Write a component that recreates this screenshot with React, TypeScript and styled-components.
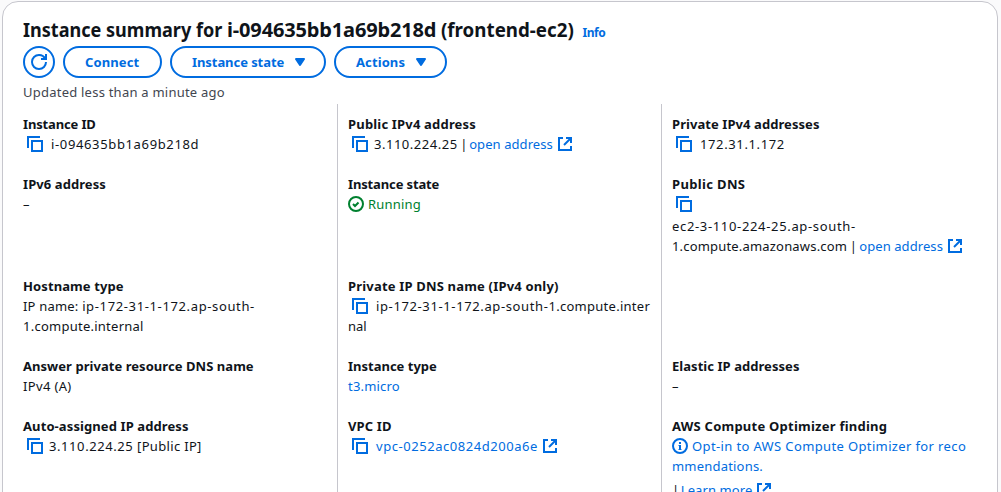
import React from 'react';
import styled, { createGlobalStyle } from 'styled-components';

const GlobalStyle = createGlobalStyle`
  * { box-sizing: border-box; }
  body { margin: 0; background: #fff; overflow: hidden; }
`;

const Page = styled.main`
  height: 492px;
  padding: 1px 3px 0 2px;
  overflow: hidden;
  background: #fafafb;
  color: #0f141a;
  font: 13px/20px 'Noto Sans', 'Open Sans', sans-serif;
`;

const Panel = styled.section`
  height: 560px;
  padding: 16px 20px 0;
  border: 1px solid #c6c6cd;
  border-radius: 16px;
  background: #fff;
`;

const Heading = styled.h1`
  display: flex;
  align-items: baseline;
  height: 24px;
  margin: 0 0 4px;
  font-size: 20px;
  line-height: 24px;
  font-weight: 700;
  white-space: pre;
`;

const Condensed = styled.span<{ $width: number; $scale: number }>`
  width: ${(p) => p.$width}px;
  transform: scaleX(${(p) => p.$scale});
  transform-origin: left center;
`;

const Run = styled.span<{ $ls?: number }>`
  letter-spacing: ${(p) => p.$ls ?? 0}px;
`;

const Info = styled.a`
  margin-left: 8px;
  color: #006ce0;
  font-size: 12px;
  font-weight: 700;
  letter-spacing: -0.4px;
`;

const Toolbar = styled.div`
  display: flex;
  gap: 8px;
  height: 32px;
`;

const Button = styled.button<{ $width: number; $icon?: boolean }>`
  display: flex;
  align-items: center;
  gap: 8px;
  width: ${(p) => p.$width}px;
  height: 32px;
  padding: 0 0 0 ${(p) => (p.$icon ? 6 : 20)}px;
  border: 2px solid #006ce0;
  border-radius: 20px;
  background: #fff;
  color: #006ce0;
  font: inherit;
  font-weight: 700;
  white-space: nowrap;
`;

const Updated = styled.p`
  margin: 4px 0 2px;
  color: #424650;
`;

const Columns = styled.div`
  display: grid;
  grid-template-columns: 314px 324px 314px;
  height: 440px;
`;

const Column = styled.div<{ $divided?: boolean }>`
  display: grid;
  grid-template-rows: 60px 102px 80px 60px 80px;
  padding: 10px 0 0 ${(p) => (p.$divided ? 10 : 0)}px;
  border-left: ${(p) => (p.$divided ? '1px solid #c6c6cd' : '0')};
`;

const Label = styled.div<{ $ls?: number }>`
  font-weight: 700;
  letter-spacing: ${(p) => p.$ls ?? 0}px;
  white-space: nowrap;
`;

const Line = styled.div<{ $gap?: number }>`
  display: flex;
  align-items: center;
  height: 20px;
  margin-top: ${(p) => p.$gap ?? 0}px;
  white-space: pre;
`;

const Link = styled.a<{ $ls?: number }>`
  color: #006ce0;
  letter-spacing: ${(p) => p.$ls ?? 0}px;
`;

const Success = styled.span`
  display: flex;
  align-items: center;
  gap: 4px;
  color: #00802f;
`;

const Glyph = styled.svg<{ $left?: number; $right?: number }>`
  flex: none;
  width: 16px;
  height: 16px;
  margin: 0 ${(p) => p.$right ?? 0}px 0 ${(p) => p.$left ?? 0}px;
  fill: none;
  stroke: currentColor;
  stroke-width: 2;
`;

const Blue = styled.span`
  display: flex;
  color: #006ce0;
`;

const Copy = ({ gap = 8 }: { gap?: number }) => (
  <Blue>
    <Glyph viewBox="0 0 16 16" $left={4} $right={gap}>
      <path d="M15 5H5v10h10V5Z" />
      <path d="M13 1H1v11" />
    </Glyph>
  </Blue>
);

const External = () => (
  <Blue>
    <Glyph viewBox="0 0 16 16" $left={4}>
      <path d="M10 2h4v4" strokeLinecap="square" />
      <path d="m7 9 7-7" />
      <path d="M14 10v4H2V2h4" />
    </Glyph>
  </Blue>
);

const Caret = () => (
  <Glyph viewBox="0 0 16 16">
    <path d="M4 5h8l-4 6-4-6z" fill="currentColor" strokeLinejoin="round" />
  </Glyph>
);

export default function App() {
  return (
    <>
      <GlobalStyle />
      <Page>
        <Panel>
          <Heading>
            <Condensed $width={204} $scale={0.903}>Instance summary for </Condensed>
            <Run $ls={-0.15}>i-094635bb1a69b218d </Run>
            <Condensed $width={133} $scale={0.937}>(frontend-ec2)</Condensed>
            <Info>Info</Info>
          </Heading>
          <Toolbar>
            <Button $width={32} $icon aria-label="Refresh">
              <Glyph viewBox="0 0 16 16">
                <path d="M10 5h5V0" />
                <path d="M15 8a6.957 6.957 0 0 1-7 7 6.957 6.957 0 0 1-7-7 6.957 6.957 0 0 1 7-7 6.87 6.87 0 0 1 6.3 4" />
              </Glyph>
            </Button>
            <Button $width={99}><Run $ls={0.1}>Connect</Run></Button>
            <Button $width={156}><Run $ls={-0.07}>Instance state</Run><Caret /></Button>
            <Button $width={113}><Run $ls={0.1}>Actions</Run><Caret /></Button>
          </Toolbar>
          <Updated><Run $ls={0.23}>Updated less than a minute ago</Run></Updated>
          <Columns>
            <Column>
              <div>
                <Label $ls={-0.15}>Instance ID</Label>
                <Line><Copy /><Run $ls={0.64}>i-094635bb1a69b218d</Run></Line>
              </div>
              <div>
                <Label $ls={0.08}>IPv6 address</Label>
                <Line>–</Line>
              </div>
              <div>
                <Label $ls={0.1}>Hostname type</Label>
                <Line><Run $ls={0.2}>IP name: </Run><Run $ls={0.63}>ip-172-31-1-172.ap-south-</Run></Line>
                <Line><Run $ls={0.25}>1.compute.internal</Run></Line>
              </div>
              <div>
                <Label $ls={0.05}>Answer private resource DNS name</Label>
                <Line><Run $ls={0.35}>IPv4 (A)</Run></Line>
              </div>
              <div>
                <Label $ls={0.1}>Auto-assigned IP address</Label>
                <Line><Copy gap={6} /><Run $ls={0.58}>3.110.224.25</Run><Run $ls={0.33}> [Public IP]</Run></Line>
              </div>
            </Column>
            <Column $divided>
              <div>
                <Label $ls={0.18}>Public IPv4 address</Label>
                <Line><Copy gap={6} /><Run $ls={0.52}>3.110.224.25</Run><Run $ls={-0.8}> | </Run><Link $ls={0.08}>open address</Link><External /></Line>
              </div>
              <div>
                <Label $ls={-0.14}>Instance state</Label>
                <Line>
                  <Success>
                    <Glyph viewBox="0 0 16 16">
                      <circle cx="8" cy="8" r="7" />
                      <path d="m5 8 2 2 3.521-3.521" />
                    </Glyph>
                    <Run $ls={0.18}>Running</Run>
                  </Success>
                </Line>
              </div>
              <div>
                <Label $ls={0.18}>Private IP DNS name (IPv4 only)</Label>
                <Line><Copy /><Run $ls={0.62}>ip-172-31-1-172.ap-south-</Run><Run $ls={0.27}>1.compute.inter</Run></Line>
                <Line>nal</Line>
              </div>
              <div>
                <Label>Instance type</Label>
                <Line><Link $ls={0.2}>t3.micro</Link></Line>
              </div>
              <div>
                <Label $ls={0.15}>VPC ID</Label>
                <Line><Copy /><Link $ls={0.55}>vpc-0252ac0824d200a6e</Link><External /></Line>
              </div>
            </Column>
            <Column $divided>
              <div>
                <Label $ls={0.07}>Private IPv4 addresses</Label>
                <Line><Copy /><Run $ls={0.62}>172.31.1.172</Run></Line>
              </div>
              <div>
                <Label $ls={0.35}>Public DNS</Label>
                <Line><Copy /></Line>
                <Line $gap={2}><Run $ls={0.66}>ec2-3-110-224-25.ap-south-</Run></Line>
                <Line><Run $ls={0.18}>1.compute.amazonaws.com</Run><Run $ls={-0.6}> | </Run><Link $ls={0.08}>open address</Link><External /></Line>
              </div>
              <div />
              <div>
                <Label $ls={0.05}>Elastic IP addresses</Label>
                <Line>–</Line>
              </div>
              <div>
                <Label $ls={0.24}>AWS Compute Optimizer finding</Label>
                <Line>
                  <Blue>
                    <Glyph viewBox="0 0 16 16" $right={4}>
                      <circle cx="8" cy="8" r="7" />
                      <path d="M8 12V7M8 6V4" />
                      <path d="M6.5 7.5H8M6.5 11.5h3" strokeWidth="1" />
                    </Glyph>
                  </Blue>
                  <Link $ls={0.37}>Opt-in to AWS Compute Optimizer for reco</Link>
                </Line>
                <Line><Link $ls={0.2}>mmendations.</Link></Line>
                <Line $gap={4}><Run $ls={-0.9}>| </Run><Link $ls={0.1}>Learn more</Link><External /></Line>
              </div>
            </Column>
          </Columns>
        </Panel>
      </Page>
    </>
  );
}
